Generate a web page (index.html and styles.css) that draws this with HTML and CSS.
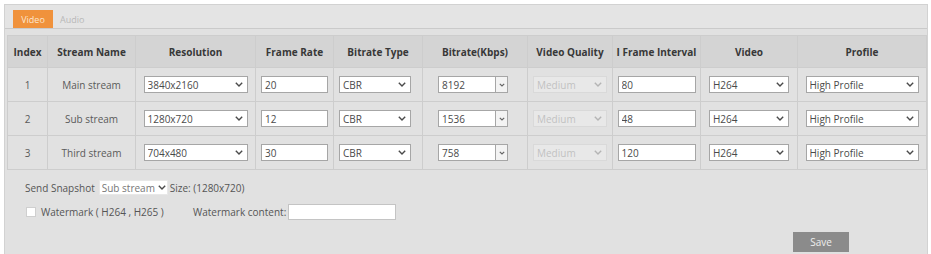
FILE: index.html
```html
<!DOCTYPE html>
<html>
<head>
<meta charset="utf-8">
<link rel="stylesheet" href="styles.css">
</head>
<body>
<div class="panel">
  <div class="tabs">
    <span class="tab active">Video</span>
    <span class="tab">Audio</span>
  </div>
  <table class="grid">
    <colgroup>
      <col style="width:40px"><col style="width:88px"><col style="width:120px"><col style="width:78px"><col style="width:89px"><col style="width:105px"><col style="width:85px"><col style="width:88px"><col style="width:97px"><col style="width:129px">
    </colgroup>
    <thead>
      <tr>
        <th>Index</th><th>Stream Name</th><th>Resolution</th><th>Frame Rate</th><th>Bitrate Type</th><th>Bitrate(Kbps)</th><th>Video Quality</th><th>I Frame Interval</th><th>Video</th><th>Profile</th>
      </tr>
    </thead>
    <tbody>
      <tr>
        <td>1</td><td>Main stream</td>
        <td><span class="sel w-res"><select><option>3840x2160</option></select><svg class="chev" viewBox="0 0 8 5"><path d="M0.8 0.8 L4 4 L7.2 0.8"/></svg></span></td>
        <td><input class="txt w-fr" type="text" value="20"></td>
        <td><span class="sel w-bt"><select><option>CBR</option></select><svg class="chev" viewBox="0 0 8 5"><path d="M0.8 0.8 L4 4 L7.2 0.8"/></svg></span></td>
        <td><span class="combo"><input class="txt" type="text" value="8192"><span class="cbtn"><svg viewBox="0 0 6 4"><path d="M0.8 0.8 L3 3 L5.2 0.8"/></svg></span></span></td>
        <td><span class="sel w-vq dis"><select disabled><option>Medium</option></select><svg class="chev" viewBox="0 0 8 5"><path d="M0.8 0.8 L4 4 L7.2 0.8"/></svg></span></td>
        <td><input class="txt w-if" type="text" value="80"></td>
        <td><span class="sel w-vid"><select><option>H264</option></select><svg class="chev" viewBox="0 0 8 5"><path d="M0.8 0.8 L4 4 L7.2 0.8"/></svg></span></td>
        <td><span class="sel w-pro"><select><option>High Profile</option></select><svg class="chev" viewBox="0 0 8 5"><path d="M0.8 0.8 L4 4 L7.2 0.8"/></svg></span></td>
      </tr>
      <tr>
        <td>2</td><td>Sub stream</td>
        <td><span class="sel w-res"><select><option>1280x720</option></select><svg class="chev" viewBox="0 0 8 5"><path d="M0.8 0.8 L4 4 L7.2 0.8"/></svg></span></td>
        <td><input class="txt w-fr" type="text" value="12"></td>
        <td><span class="sel w-bt"><select><option>CBR</option></select><svg class="chev" viewBox="0 0 8 5"><path d="M0.8 0.8 L4 4 L7.2 0.8"/></svg></span></td>
        <td><span class="combo"><input class="txt" type="text" value="1536"><span class="cbtn"><svg viewBox="0 0 6 4"><path d="M0.8 0.8 L3 3 L5.2 0.8"/></svg></span></span></td>
        <td><span class="sel w-vq dis"><select disabled><option>Medium</option></select><svg class="chev" viewBox="0 0 8 5"><path d="M0.8 0.8 L4 4 L7.2 0.8"/></svg></span></td>
        <td><input class="txt w-if" type="text" value="48"></td>
        <td><span class="sel w-vid"><select><option>H264</option></select><svg class="chev" viewBox="0 0 8 5"><path d="M0.8 0.8 L4 4 L7.2 0.8"/></svg></span></td>
        <td><span class="sel w-pro"><select><option>High Profile</option></select><svg class="chev" viewBox="0 0 8 5"><path d="M0.8 0.8 L4 4 L7.2 0.8"/></svg></span></td>
      </tr>
      <tr>
        <td>3</td><td>Third stream</td>
        <td><span class="sel w-res"><select><option>704x480</option></select><svg class="chev" viewBox="0 0 8 5"><path d="M0.8 0.8 L4 4 L7.2 0.8"/></svg></span></td>
        <td><input class="txt w-fr" type="text" value="30"></td>
        <td><span class="sel w-bt"><select><option>CBR</option></select><svg class="chev" viewBox="0 0 8 5"><path d="M0.8 0.8 L4 4 L7.2 0.8"/></svg></span></td>
        <td><span class="combo"><input class="txt" type="text" value="758"><span class="cbtn"><svg viewBox="0 0 6 4"><path d="M0.8 0.8 L3 3 L5.2 0.8"/></svg></span></span></td>
        <td><span class="sel w-vq dis"><select disabled><option>Medium</option></select><svg class="chev" viewBox="0 0 8 5"><path d="M0.8 0.8 L4 4 L7.2 0.8"/></svg></span></td>
        <td><input class="txt w-if" type="text" value="120"></td>
        <td><span class="sel w-vid"><select><option>H264</option></select><svg class="chev" viewBox="0 0 8 5"><path d="M0.8 0.8 L4 4 L7.2 0.8"/></svg></span></td>
        <td><span class="sel w-pro"><select><option>High Profile</option></select><svg class="chev" viewBox="0 0 8 5"><path d="M0.8 0.8 L4 4 L7.2 0.8"/></svg></span></td>
      </tr>
    </tbody>
  </table>
  <div class="opts">
    <div class="line">
      <span>Send Snapshot</span>
      <span class="sel small w-snap"><select><option>Sub stream</option></select><svg class="chev" viewBox="0 0 8 5"><path d="M0.8 0.8 L4 4 L7.2 0.8"/></svg></span>
      <span>Size: (1280x720)</span>
    </div>
    <div class="line">
      <span class="chk"></span>
      <span class="wm">Watermark ( H264 , H265 )</span>
      <span class="wmc">Watermark content:</span>
      <input class="txt w-wm" type="text" value="">
    </div>
  </div>
  <div class="actions">
    <button class="save">Save</button>
  </div>
</div>
</body>
</html>
```

FILE: styles.css
```css
html, body {
  margin: 0;
  padding: 0;
  background: #ffffff;
}
body {
  font-family: "Open Sans", "DejaVu Sans", sans-serif;
  font-size: 10px;
  color: #444;
}
.panel {
  margin: 4px 3px 0 4px;
  height: 250px;
  box-sizing: border-box;
  background: #e1e1e1;
  border: 1px solid #d2d2d2;
  border-bottom: none;
  position: relative;
}
.tabs {
  display: flex;
  align-items: flex-end;
  gap: 5px;
  height: 23px;
  padding: 0 0 0 8px;
  border-bottom: 1px solid #cacaca;
  background: #e4e4e4;
}
.tab {
  display: inline-flex;
  align-items: center;
  justify-content: center;
  height: 18px;
  color: #b8b8b8;
  font-size: 9px;
  padding: 0 2px;
}
.tab.active {
  width: 40px;
  padding: 0;
  background: #f0923c;
  color: #fde6cf;
}
.grid {
  margin: 6px 0 0 2px;
  border-collapse: collapse;
  table-layout: fixed;
  width: 919px;
}
.grid th, .grid td {
  border: 1px solid #cdcdcd;
  text-align: center;
  padding: 0;
}
.grid th {
  height: 31px;
  background: #d4d4d4;
  font-weight: 700;
  color: #383838;
  font-size: 10px;
}
.grid td {
  height: 33px;
  color: #5a5a5a;
}
.sel {
  position: relative;
  display: inline-block;
  vertical-align: middle;
}
.sel select {
  appearance: none;
  -webkit-appearance: none;
  width: 100%;
  height: 17px;
  box-sizing: border-box;
  border: 1px solid #a6a6a6;
  background: #fff;
  font: inherit;
  color: #4a4a4a;
  padding: 0 0 0 3px;
  margin: 0;
  border-radius: 0;
  display: block;
}
.chev {
  position: absolute;
  right: 5px;
  top: 6px;
  width: 8px;
  height: 5px;
  fill: none;
  stroke: #4a4a4a;
  stroke-width: 1.4;
  pointer-events: none;
}
.sel.dis select {
  background: #ececec;
  border-color: #d6d6d6;
  color: #b4b4b4;
}
.sel.dis .chev {
  stroke: #b4b4b4;
}
.txt {
  height: 17px;
  box-sizing: border-box;
  border: 1px solid #a6a6a6;
  background: #fff;
  font: inherit;
  color: #4a4a4a;
  padding: 0 0 0 3px;
  margin: 0;
  vertical-align: middle;
}
.w-res { width: 104px; }
.w-fr { width: 67px; }
.w-bt { width: 72px; margin-right: 6px; }
.w-vq { width: 74px; }
.w-if { width: 78px; }
.w-vid { width: 80px; }
.w-pro { width: 113px; }
.combo {
  display: inline-flex;
  vertical-align: middle;
  width: 70px;
  margin-right: 4px;
}
.combo .txt {
  width: 58px;
}
.cbtn {
  width: 12px;
  height: 17px;
  box-sizing: border-box;
  border: 1px solid #a6a6a6;
  border-left: none;
  background: #f3f3f3;
  display: flex;
  align-items: center;
  justify-content: center;
}
.cbtn svg {
  width: 6px;
  height: 4px;
  fill: none;
  stroke: #666;
  stroke-width: 1.2;
}
.opts {
  padding: 10px 0 0 20px;
  display: flex;
  flex-direction: column;
  gap: 9px;
  color: #555;
}
.line {
  display: flex;
  align-items: center;
  height: 15px;
}
.sel.small {
  margin: 0 2px 0 4px;
}
.sel.small select {
  height: 15px;
  border-color: #e8e8e8;
  color: #777;
  padding-left: 2px;
}
.sel.small .chev {
  right: 2px;
  top: 5px;
}
.w-snap { width: 69px; }
.chk {
  width: 8px;
  height: 8px;
  background: #fff;
  border: 1px solid #cfcfcf;
  margin: 0 5px 0 1px;
}
.wm { width: 152px; }
.wmc { margin-right: 2px; }
.w-wm {
  width: 108px;
  height: 16px;
  border-color: #c4c4c4;
}
.actions {
  display: flex;
  justify-content: flex-end;
  padding: 13px 78px 0 0;
}
.save {
  width: 56px;
  height: 20px;
  border: none;
  background: #8b8b8b;
  color: #eee;
  font: inherit;
  font-size: 10px;
  padding: 0;
  margin: 0;
}
```
